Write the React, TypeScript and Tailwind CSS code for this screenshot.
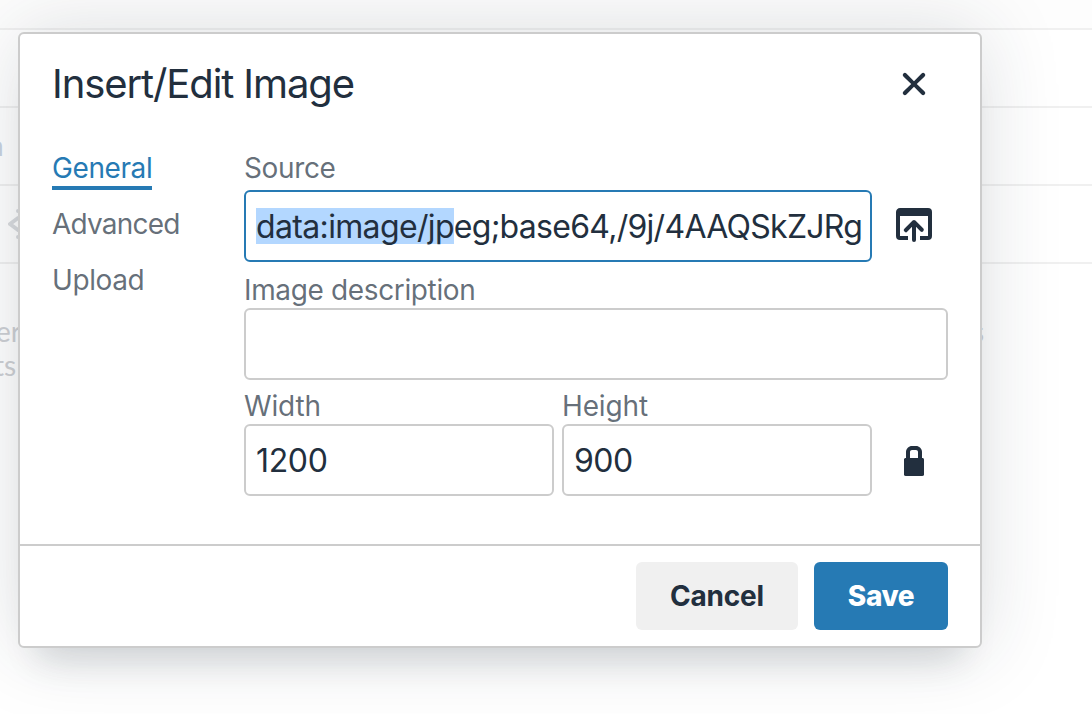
import type { ReactNode } from 'react';

function Icon({ children }: { children: ReactNode }) {
  return (
    <svg width="48" height="48" viewBox="0 0 24 24" fill="#222f3e" className="block shrink-0">
      {children}
    </svg>
  );
}

function CloseIcon() {
  return (
    <Icon>
      <path d="M17.3 8.2L13.4 12l3.9 3.8a1 1 0 01-1.5 1.5L12 13.4l-3.8 3.9a1 1 0 01-1.5-1.5l3.9-3.8-3.9-3.8a1 1 0 011.5-1.5l3.8 3.9 3.8-3.9a1 1 0 011.5 1.5z" />
    </Icon>
  );
}

function BrowseIcon() {
  return (
    <Icon>
      <path d="M19 4a2 2 0 012 2v12a2 2 0 01-2 2h-4v-2h4V8H5v10h4v2H5a2 2 0 01-2-2V6c0-1.1.9-2 2-2h14zm-8 9.4l-2.3 2.3a1 1 0 11-1.4-1.4l4-4a1 1 0 011.4 0l4 4a1 1 0 01-1.4 1.4L13 13.4V20a1 1 0 01-2 0v-6.6z" />
    </Icon>
  );
}

function LockIcon() {
  return (
    <Icon>
      <path
        fillRule="evenodd"
        d="M16.3 11c.2 0 .3 0 .5.2l.2.6v7.4c0 .3 0 .4-.2.6l-.6.2H7.8c-.3 0-.4 0-.6-.2a.7.7 0 01-.2-.6v-7.4c0-.2 0-.4.2-.5l.5-.3H8V8c0-.8.3-1.5.9-2.1.6-.6 1.3-.9 2.1-.9h2c.8 0 1.5.3 2.1.9.6.6.9 1.3.9 2.1v3h.3zM10 8v3h4V8a1 1 0 00-.3-.7A1 1 0 0013 7h-2a1 1 0 00-.7.3 1 1 0 00-.3.7z"
      />
    </Icon>
  );
}

function Label({ children }: { children: ReactNode }) {
  return <div className="h-8 whitespace-nowrap text-[28px] leading-8 text-[#222f3e]/70">{children}</div>;
}

function Page() {
  return (
    <div className="flex h-full flex-col bg-white font-['Lato',sans-serif] text-[28px] text-[#ced0d4]">
      <div className="h-[30px] border-b-2 border-[#f0f0f0] bg-[#fdfdfd]" />
      <div className="h-[78px] border-b-2 border-[#f0f0f0]" />
      <div className="flex h-[78px] items-center border-b-2 border-[#f0f0f0]">
        <span className="-ml-[12px] pb-[2px] text-[#c9d2df]">n</span>
      </div>
      <div className="flex h-[78px] items-center border-b-2 border-[#f0f0f0] pl-2">
        <svg width="36" height="30" viewBox="0 0 36 30" fill="none" stroke="#dadcdf" strokeWidth="4" strokeLinecap="round" strokeLinejoin="round">
          <path d="M10 2h22M10 9L2 15l8 6M10 28h22" />
        </svg>
      </div>
      <div className="flex justify-between pt-[50px] leading-[34px]">
        <div className="-ml-[4px]">
          <div>er</div>
          <div className="-ml-[2px]">ts</div>
        </div>
        <div className="mr-[108px]">s</div>
      </div>
    </div>
  );
}

export default function App() {
  return (
    <div className="relative h-[714px] w-[1092px] overflow-hidden">
      <Page />
      <div
        role="dialog"
        className="absolute left-[18px] top-8 flex h-[616px] w-[964px] flex-col rounded-md border-2 border-[#cccccc] bg-white font-['Inter',sans-serif] text-[#222f3e] shadow-[0_32px_32px_-20px_rgba(34,47,62,0.15),0_0_80px_2px_rgba(34,47,62,0.15)]"
      >
        <header className="flex h-[100px] items-center justify-between pl-8 pr-[42px]">
          <h1 className="whitespace-nowrap text-[40px] leading-[52px] tracking-[-1.1px]">Insert/Edit Image</h1>
          <button aria-label="Close">
            <CloseIcon />
          </button>
        </header>

        <div className="flex flex-1 px-8">
          <nav className="flex w-48 flex-col items-start pt-4 text-[28px] leading-9 text-[#222f3e]/70">
            <div className="mb-4 h-10 w-[100px] whitespace-nowrap border-b-4 border-[#267ab4] tracking-[-0.4px] text-[#267ab4]">General</div>
            <div className="mb-4 h-10 whitespace-nowrap tracking-[-0.8px]">Advanced</div>
            <div className="h-10 whitespace-nowrap tracking-[-0.4px]">Upload</div>
          </nav>

          <div className="flex w-[704px] flex-col pt-[18px] tracking-[-0.36px]">
            <Label>Source</Label>
            <div className="mt-[6px] flex items-start gap-[18px]">
              <div className="flex h-[72px] w-[628px] items-center whitespace-nowrap rounded-md border-2 border-[#267ab4] px-[10px] text-[32px]">
                <span className="h-9 bg-[#b3d7ff] leading-[38px] tracking-[-0.65px]">data:image/jp</span>
                <span className="h-9 leading-[38px] tracking-[-0.72px]">eg;base64,/9j/4AAQSkZJRg</span>
              </div>
              <div className="pt-[10px]">
                <BrowseIcon />
              </div>
            </div>
            <div className="mt-3">
              <Label>Image description</Label>
              <div className="mt-[2px] h-[72px] rounded-md border-2 border-[#cccccc]" />
            </div>
            <div className="mt-[10px] flex items-end tracking-[-0.15px]">
              <div className="mr-2 w-[310px]">
                <Label>Width</Label>
                <div className="mt-[2px] flex h-[72px] items-center rounded-md border-2 border-[#cccccc] px-[10px] pt-[2px] text-[32px] tracking-[-0.35px]">1200</div>
              </div>
              <div className="w-[310px]">
                <Label>Height</Label>
                <div className="mt-[2px] flex h-[72px] items-center rounded-md border-2 border-[#cccccc] px-[10px] pt-[2px] text-[32px] tracking-[-0.5px]">900</div>
              </div>
              <div className="mb-3 ml-[18px]">
                <LockIcon />
              </div>
            </div>
          </div>
        </div>

        <footer className="flex h-[102px] items-center justify-end gap-4 border-t-2 border-[#cccccc] px-8 text-[28px] font-bold">
          <button className="h-[68px] w-[162px] rounded-md bg-[#f0f0f0] tracking-[-0.2px]">Cancel</button>
          <button className="h-[68px] w-[134px] rounded-md bg-[#267ab4] font-extrabold tracking-[-0.4px] text-white">Save</button>
        </footer>
      </div>
    </div>
  );
}
